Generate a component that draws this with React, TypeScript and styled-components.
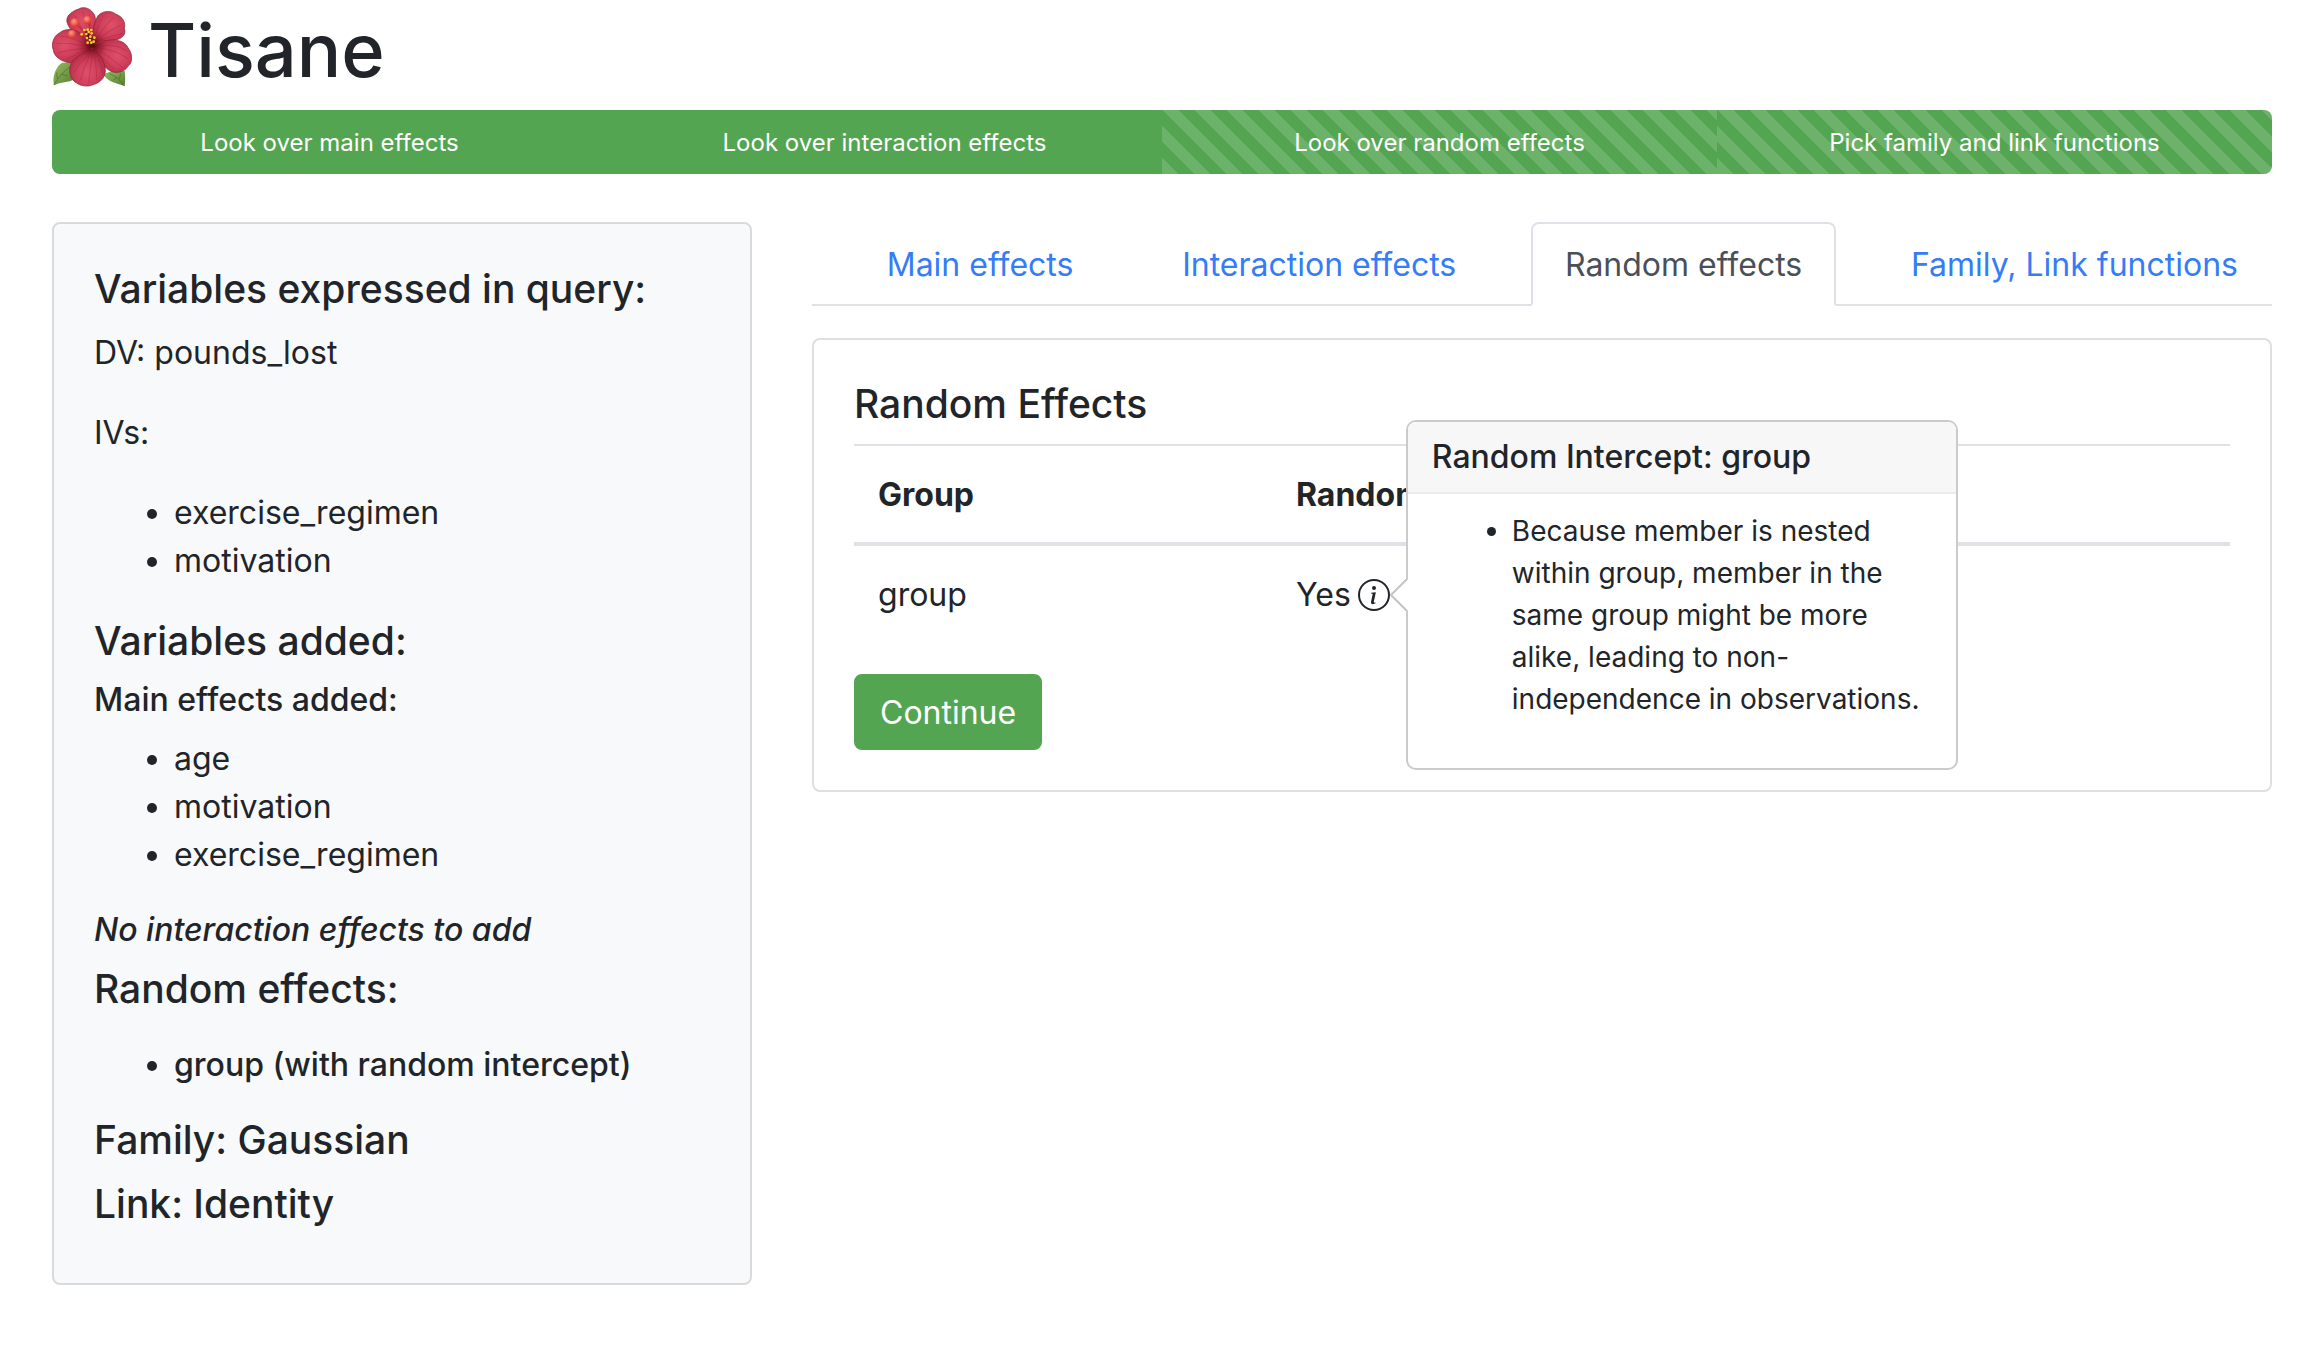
import React from "react";
import styled, { createGlobalStyle, css } from "styled-components";
import { BsInfoCircle } from "react-icons/bs";

const GlobalStyle = createGlobalStyle`
  *, *::before, *::after { box-sizing: border-box; }
  body {
    margin: 0;
    background: #fff;
    color: #212529;
    font-family: Inter, "Liberation Sans", sans-serif;
    font-size: 32px;
    line-height: 48px;
  }
`;

const Page = styled.div`
  padding: 0 26px 48px 52px;
`;

const Brand = styled.h1`
  display: flex;
  align-items: flex-start;
  gap: 16px;
  margin: 0 0 10px;
  font-size: 74px;
  font-weight: 500;
  line-height: 100px;
`;

const Logo = styled.svg`
  width: 80px;
  height: 80px;
  margin-top: 7px;
`;

const Steps = styled.div`
  display: flex;
  height: 64px;
  margin-bottom: 48px;
  overflow: hidden;
  border-radius: 8px;
  font-size: 24px;
`;

const Step = styled.div<{ $pending?: boolean }>`
  flex: 1;
  display: flex;
  align-items: center;
  justify-content: center;
  padding-top: 2px;
  color: #fff;
  background-color: #53a551;
  ${(p) =>
    p.$pending &&
    css`
      background-image: linear-gradient(
        45deg,
        rgba(255, 255, 255, 0.15) 25%,
        transparent 25%,
        transparent 50%,
        rgba(255, 255, 255, 0.15) 50%,
        rgba(255, 255, 255, 0.15) 75%,
        transparent 75%,
        transparent
      );
      background-size: 32px 32px;
    `}
`;

const Columns = styled.div`
  display: grid;
  grid-template-columns: repeat(12, minmax(0, 1fr));
  column-gap: 60px;
  align-items: start;
`;

const Card = styled.section`
  padding: 40px;
  border: 2px solid #dfdfdf;
  border-radius: 8px;
  background: #fff;
`;

const Summary = styled(Card)`
  grid-column: span 4;
  padding: 41px 40px 39px;
  border-color: #d9dadb;
  background: #f8f9fb;
`;

const Main = styled.main`
  grid-column: span 8;
`;

const Heading = styled.h2`
  margin: 0 0 16px;
  font-size: 39px;
  font-weight: 500;
  line-height: 48px;
`;

const SubHeading = styled.h3<{ $italic?: boolean }>`
  margin: 0 0 16px;
  font-size: 32px;
  font-weight: 500;
  font-style: ${(p) => (p.$italic ? "italic" : "normal")};
  line-height: 38px;
`;

const Text = styled.p`
  margin: 0 0 32px;
`;

const List = styled.ul<{ $strong?: boolean }>`
  margin: 0 0 32px;
  padding-left: 80px;
  ${(p) =>
    p.$strong &&
    css`
      margin-top: 32px;
      font-weight: 500;
      line-height: 39px;
    `}
`;

const Tabs = styled.ul`
  display: flex;
  margin: 0 0 32px;
  padding: 0;
  list-style: none;
  border-bottom: 2px solid #dee2e6;
`;

const TabItem = styled.li`
  margin: 0 0 -2px auto;
`;

const TabLink = styled.a<{ $active?: boolean }>`
  display: block;
  padding: 17px 32px 15px;
  border: 2px solid transparent;
  border-radius: 8px 8px 0 0;
  color: #357cf7;
  text-decoration: none;
  ${(p) =>
    p.$active &&
    css`
      color: #495057;
      background: #fff;
      border-color: #dee2e6 #dee2e6 #fff;
    `}
`;

const Table = styled.table`
  width: 100%;
  margin-bottom: 32px;
  border-spacing: 0;
  text-align: left;
`;

const Th = styled.th`
  padding: 25px 24px 23px;
  border-top: 2px solid #dee2e6;
  border-bottom: 4px solid #dee2e6;
  font-weight: 700;

  &:first-child {
    width: 418px;
  }
`;

const Td = styled.td`
  padding: 25px 24px 23px;
`;

const Answer = styled.span`
  display: flex;
  align-items: center;
  gap: 7px;
`;

const InfoAnchor = styled.span`
  position: relative;
  display: flex;
`;

const InfoButton = styled.button`
  display: flex;
  padding: 0;
  border: 0;
  background: none;
  color: inherit;
  font-size: 32px;
`;

const Popover = styled.div`
  position: absolute;
  top: 50%;
  left: calc(100% + 16px);
  width: 552px;
  transform: translateY(-50%);
  border: 2px solid #cbcbcb;
  border-radius: 10px;
  background: #fff;
  font-size: 28px;
  line-height: 42px;
`;

const PopoverArrow = styled.svg`
  position: absolute;
  top: 50%;
  left: -18px;
  width: 18px;
  height: 32px;
  transform: translateY(-50%);
`;

const PopoverTitle = styled.h3`
  margin: 0;
  padding: 16px 24px;
  border-bottom: 2px solid #ebebeb;
  border-radius: 8px 8px 0 0;
  background: #f7f7f7;
  font-size: 32px;
  font-weight: 500;
  line-height: 38px;
`;

const PopoverBody = styled.div`
  padding: 16px 24px;
`;

const ContinueButton = styled.button`
  padding: 13px 24px 11px;
  border: 2px solid #53a551;
  border-radius: 8px;
  background: #53a551;
  color: #fff;
  font: inherit;
`;

const petals = [
  { d: "M184 130C150 118 118 92 111 66C106 42 134 30 146 26C158 18 178 22 188 36C198 46 198 62 194 78Z", cx: 160, cy: 62 },
  { d: "M186 132C184 96 192 62 206 44C220 30 246 30 258 42C278 48 288 68 283 84C290 102 276 116 256 119C230 122 208 122 186 132Z", cx: 244, cy: 74 },
  { d: "M186 138C236 108 282 116 294 142C308 160 310 186 294 198C284 214 262 220 246 214C222 206 208 176 186 138Z", cx: 262, cy: 166 },
  { d: "M186 140C178 158 150 186 120 187C98 186 72 170 70 150C62 130 72 106 88 98C104 84 130 84 150 98Z", cx: 104, cy: 134 },
  { d: "M188 146C208 156 226 186 226 208C228 230 210 248 192 252C174 262 150 256 140 248C120 238 116 214 121 196C126 174 160 158 188 146Z", cx: 172, cy: 218 },
];

const veins =
  "M176 112Q150 80 134 46M180 108Q166 70 158 34M184 106Q184 70 178 40M194 110Q206 70 220 46M200 112Q226 74 250 52M204 116Q240 88 274 74M206 120Q246 106 276 100M212 138Q256 128 290 152M210 144Q254 148 296 176M208 152Q240 170 280 204M206 160Q226 184 252 206M160 128Q120 108 92 108M158 136Q116 126 80 130M158 144Q118 148 82 158M160 152Q132 168 108 176M172 166Q146 190 132 216M178 168Q160 200 152 240M186 168Q180 210 176 248M194 168Q200 206 200 238M200 166Q214 190 218 218";

const anthers = [
  [163, 89], [173, 88], [184, 89], [155, 102], [169, 101], [185, 99], [181, 109], [193, 112],
  [171, 113], [180, 119], [191, 124], [173, 127], [184, 127], [176, 95],
];

function Hibiscus() {
  return (
    <Logo viewBox="66 20 240 240" role="img" aria-label="Hibiscus">
      <defs>
        {petals.map((p, i) => (
          <radialGradient key={i} id={`petal${i}`} gradientUnits="userSpaceOnUse" cx={p.cx} cy={p.cy} r="84">
            <stop offset="0" stopColor="#de506a" />
            <stop offset="0.4" stopColor="#d03f5b" />
            <stop offset="0.75" stopColor="#ad2b43" />
            <stop offset="1" stopColor="#7d1626" />
          </radialGradient>
        ))}
        <radialGradient id="throat" gradientUnits="userSpaceOnUse" cx="187" cy="134" r="42">
          <stop offset="0" stopColor="#4d0510" />
          <stop offset="0.35" stopColor="#7a0c1c" stopOpacity="0.75" />
          <stop offset="1" stopColor="#a01a30" stopOpacity="0" />
        </radialGradient>
        <radialGradient id="stigma" cx="0.4" cy="0.35" r="0.7">
          <stop offset="0" stopColor="#ff9a86" />
          <stop offset="1" stopColor="#d92b25" />
        </radialGradient>
        <linearGradient id="leaf" x1="0" y1="0" x2="1" y2="1">
          <stop offset="0" stopColor="#95ba62" />
          <stop offset="1" stopColor="#557f2f" />
        </linearGradient>
      </defs>
      <path d="M72 255C66 228 78 198 96 187L126 186L136 236C112 248 94 244 72 255Z" fill="url(#leaf)" />
      <path d="M284 258C286 240 286 224 284 212L246 212L220 222C234 246 258 248 284 258Z" fill="url(#leaf)" />
      <path d="M72 254Q92 218 120 200M82 236L80 216M94 222L112 226M284 257Q262 228 238 220M268 236L272 220M262 230L250 240" fill="none" stroke="#46712a" strokeWidth="2" />
      {petals.map((p, i) => (
        <path key={i} d={p.d} fill={`url(#petal${i})`} stroke="#8f2034" strokeWidth="2" />
      ))}
      <path d={veins} fill="none" stroke="#961c34" strokeWidth="2" opacity="0.5" />
      <circle cx="187" cy="134" r="42" fill="url(#throat)" />
      <path d="M182 122Q168 96 134 67M182 118Q182 86 173 60M180 122Q164 96 126 101" fill="none" stroke="#c92c35" strokeWidth="4" />
      <path d="M188 136Q180 112 170 96" fill="none" stroke="#5f0c16" strokeWidth="9" strokeLinecap="round" />
      {anthers.map(([x, y]) => (
        <circle key={`${x}-${y}`} cx={x} cy={y} r="4" fill="#f7d52b" />
      ))}
      <circle cx="134" cy="67" r="13" fill="url(#stigma)" />
      <circle cx="172" cy="59" r="12" fill="url(#stigma)" />
      <circle cx="126" cy="101" r="12" fill="url(#stigma)" />
    </Logo>
  );
}

const steps = [
  { label: "Look over main effects" },
  { label: "Look over interaction effects" },
  { label: "Look over random effects", pending: true },
  { label: "Pick family and link functions", pending: true },
];

const tabs = ["Main effects", "Interaction effects", "Random effects", "Family, Link functions"];
const activeTab = "Random effects";

export default function App() {
  return (
    <Page>
      <GlobalStyle />
      <Brand>
        <Hibiscus />
        Tisane
      </Brand>
      <Steps>
        {steps.map((s) => (
          <Step key={s.label} $pending={s.pending}>
            {s.label}
          </Step>
        ))}
      </Steps>
      <Columns>
        <Summary>
          <Heading>Variables expressed in query:</Heading>
          <Text>DV: pounds_lost</Text>
          <Text>IVs:</Text>
          <List>
            <li>exercise_regimen</li>
            <li>motivation</li>
          </List>
          <Heading>Variables added:</Heading>
          <SubHeading>Main effects added:</SubHeading>
          <List>
            <li>age</li>
            <li>motivation</li>
            <li>exercise_regimen</li>
          </List>
          <SubHeading $italic>No interaction effects to add</SubHeading>
          <Heading>Random effects:</Heading>
          <List $strong>
            <li>group (with random intercept)</li>
          </List>
          <Heading>Family: Gaussian</Heading>
          <Heading>Link: Identity</Heading>
        </Summary>
        <Main>
          <Tabs>
            {tabs.map((t) => (
              <TabItem key={t}>
                <TabLink href="#" $active={t === activeTab} aria-current={t === activeTab ? "page" : undefined}>
                  {t}
                </TabLink>
              </TabItem>
            ))}
          </Tabs>
          <Card>
            <Heading>Random Effects</Heading>
            <Table>
              <thead>
                <tr>
                  <Th scope="col">Group</Th>
                  <Th scope="col">Random Intercept</Th>
                </tr>
              </thead>
              <tbody>
                <tr>
                  <Td>group</Td>
                  <Td>
                    <Answer>
                      Yes
                      <InfoAnchor>
                        <InfoButton type="button" aria-label="About this random intercept">
                          <BsInfoCircle />
                        </InfoButton>
                        <Popover role="tooltip">
                          <PopoverArrow viewBox="0 0 18 32">
                            <path d="M18 0L1 16L18 32Z" fill="#fff" />
                            <path d="M17 0L1 16L17 32" fill="none" stroke="#c4c4c4" strokeWidth="2" />
                          </PopoverArrow>
                          <PopoverTitle>Random Intercept: group</PopoverTitle>
                          <PopoverBody>
                            <List>
                              <li>
                                Because member is nested within group, member in the same group might be more
                                alike, leading to non-independence in observations.
                              </li>
                            </List>
                          </PopoverBody>
                        </Popover>
                      </InfoAnchor>
                    </Answer>
                  </Td>
                </tr>
              </tbody>
            </Table>
            <ContinueButton type="button">Continue</ContinueButton>
          </Card>
        </Main>
      </Columns>
    </Page>
  );
}
